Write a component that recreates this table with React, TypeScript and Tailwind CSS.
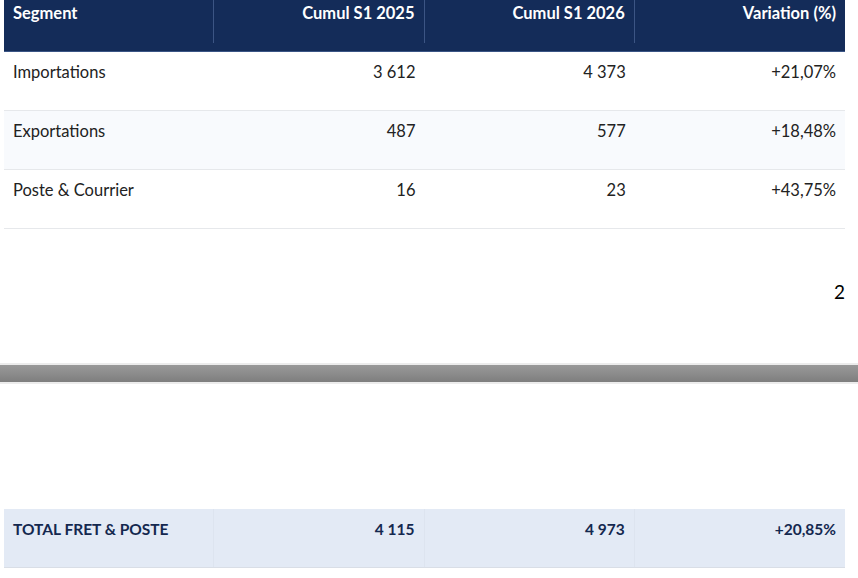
import React from "react";

const rows = [
  { s: "Importations", a: "3 612", b: "4 373", v: "+21,07%", bg: "bg-white" },
  { s: "Exportations", a: "487", b: "577", v: "+18,48%", bg: "bg-[#f8fafd]" },
  { s: "Poste & Courrier", a: "16", b: "23", v: "+43,75%", bg: "bg-white" },
];

export default function App() {
  return (
    <div className="w-[858px] h-[578px] overflow-hidden bg-white text-[16.5px] leading-[20px] text-[#222] font-['Lato','Noto_Sans',sans-serif]">
      <div className="ml-[4px] w-[841px]">
        <div className="grid grid-cols-4 h-[52px] bg-[#142c59] border-b border-[#3a5585] text-white font-bold">
          <div className="h-[43px] pl-[9px] pt-[3px] border-r border-[#3c5584]">Segment</div>
          <div className="h-[43px] pr-[9px] pt-[3px] text-right border-r border-[#3c5584]">Cumul S1 2025</div>
          <div className="h-[43px] pr-[9px] pt-[3px] text-right border-r border-[#3c5584]">Cumul S1 2026</div>
          <div className="h-[43px] pr-[9px] pt-[3px] text-right">Variation (%)</div>
        </div>
        {rows.map((r) => (
          <div key={r.s} className={`grid grid-cols-4 h-[59px] border-b border-[#e6e8eb] ${r.bg}`}>
            <div className="pl-[9px] pt-[10px]">{r.s}</div>
            <div className="pr-[9px] pt-[10px] text-right">{r.a}</div>
            <div className="pr-[9px] pt-[10px] text-right">{r.b}</div>
            <div className="pr-[9px] pt-[10px] text-right">{r.v}</div>
          </div>
        ))}
      </div>
      <div className="h-[134px] flex justify-end items-start pt-[53px] pr-[13px] text-[19px] text-black">2</div>
      <div className="border-t-2 border-b-2 border-[#ececec]">
        <div className="h-[17px] bg-gradient-to-b from-[#999] via-[#8c8c8c] to-[#7e7e7e]"></div>
      </div>
      <div className="h-[125px]"></div>
      <div className="ml-[4px] w-[841px] grid grid-cols-4 h-[59px] bg-[#e3eaf5] border-b border-[#d9dee6] text-[#14284f] text-[15.5px] font-bold">
        <div className="pl-[9px] pt-[10px] border-r border-[#dde4ef]">TOTAL FRET & POSTE</div>
        <div className="pr-[9px] pt-[10px] text-right border-r border-[#dde4ef]">4 115</div>
        <div className="pr-[9px] pt-[10px] text-right border-r border-[#dde4ef]">4 973</div>
        <div className="pr-[9px] pt-[10px] text-right">+20,85%</div>
      </div>
    </div>
  );
}
